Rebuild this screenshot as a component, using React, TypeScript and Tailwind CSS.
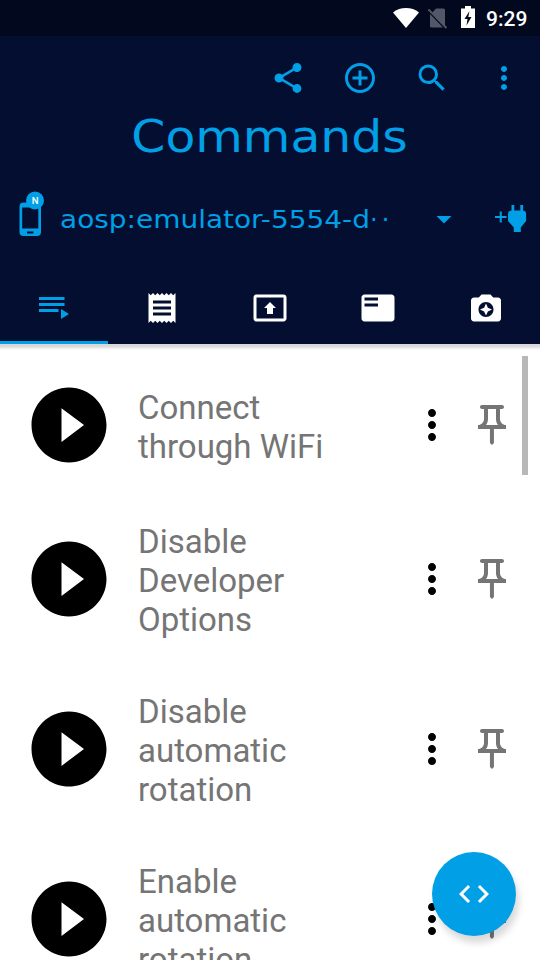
import {
  MdAddCircleOutline,
  MdArrowDropDown,
  MdCameraEnhance,
  MdCode,
  MdFeaturedPlayList,
  MdMoreVert,
  MdOutlinePushPin,
  MdPlayCircleFilled,
  MdPresentToAll,
  MdReceipt,
  MdSearch,
  MdShare,
} from "react-icons/md";

const commands = [
  { title: "Connect through WiFi", height: "h-[138px]", offset: "pt-1" },
  { title: "Disable Developer Options", height: "h-[170px]", offset: "pt-0.5" },
  { title: "Disable automatic rotation", height: "h-[170px]", offset: "pt-0.5" },
  { title: "Enable automatic rotation", height: "h-[170px]", offset: "pt-0.5" },
];

const StatusBar = () => (
  <div className="flex h-9 items-center justify-end bg-[#02091e] pr-3">
    <svg width="26" height="20" viewBox="0 0 26 20" className="mr-[9px]" fill="#fff">
      <path d="M0 4.5C7-1.4 19-1.4 26 4.5L13 20z" />
    </svg>
    <svg width="20" height="21" viewBox="0 0 20 21" className="mr-[13px]">
      <path d="M8 0.5h7.5a1.5 1.5 0 0 1 1.5 1.5v16l-13-13zM2 6l13 13.500H3.500a1.500 1.500 0 0 1-1.500-1.500z" fill="#535869" />
      <path d="M0.500 1.500L18.500 20" stroke="#535869" strokeWidth="1.800" />
    </svg>
    <svg width="14" height="22" viewBox="0 0 14 22" className="mr-[11px] -mt-0.5">
      <path d="M0 2.500h4V0h6v2.500h4V22H0z" fill="#fff" />
      <path d="M8.500 5L3.500 13h3l-1 6.500L10.500 11h-3.200z" fill="#02091e" />
    </svg>
    <span className="w-[42px] pt-0.5 text-[21px] leading-[34px] font-medium whitespace-nowrap text-white">9:29</span>
  </div>
);

const Toolbar = () => (
  <div className="flex h-[84px] items-center justify-end gap-9 pr-[18px]">
    <MdShare size={36} />
    <MdAddCircleOutline size={36} />
    <MdSearch size={36} />
    <MdMoreVert size={36} />
  </div>
);

const DeviceIcon = () => (
  <svg width="28" height="46" viewBox="0 0 28 46" className="shrink-0">
    <path
      fillRule="evenodd"
      fill="currentColor"
      d="M4.500 11.500H18a4 4 0 0 1 4 4V41a4 4 0 0 1-4 4H4.500a4 4 0 0 1-4-4V15.500a4 4 0 0 1 4-4zM3.200 16.500V37.500H19.300V16.500z"
    />
    <path d="M8 41.500h6.500" stroke="#030e30" strokeWidth="2" />
    <circle cx="16" cy="9.500" r="9" fill="currentColor" />
    <text x="16" y="13.200" textAnchor="middle" fontSize="9.500" fill="#fff" className="font-['Roboto',sans-serif] font-medium">
      N
    </text>
  </svg>
);

const PlugIcon = () => (
  <svg width="34" height="30" viewBox="0 0 34 30" fill="currentColor">
    <path d="M1 13h11.500M6.750 7.500v11" stroke="currentColor" strokeWidth="2" />
    <path d="M17.500 1h2.800v5.500h6V1h2.800v5.500q3 0.500 3 3V17l-5.300 6.500V28h-7v-4.500L14 17V9.500q0-2.500 3.500-3z" />
  </svg>
);

const DeviceRow = () => (
  <div className="flex h-[66px] items-center">
    <div className="flex w-[60px] shrink-0 pb-[10px] pl-[19px]">
      <DeviceIcon />
    </div>
    <div className="flex w-[366px] shrink-0 items-center pt-0.5 font-['DejaVu_Sans',sans-serif] text-[24px] leading-8">
      <span className="w-[310px] shrink-0">
        <span className="inline-block origin-left scale-x-[1.165] whitespace-nowrap">aosp:emulator-5554-d</span>
      </span>
      <span className="tracking-[4px]">··</span>
    </div>
    <MdArrowDropDown size={36} className="shrink-0" />
    <div className="ml-8 shrink-0">
      <PlugIcon />
    </div>
  </div>
);

const PlaylistIcon = () => (
  <svg width="36" height="36" viewBox="0 0 36 36" fill="currentColor">
    <path d="M3 7h25.500v3H3zM3 13h25.500v3H3zM3 19h19.500v3H3zM25 19v10l8-5z" />
  </svg>
);

const Tabs = () => (
  <div className="grid h-[72px] grid-cols-5 text-white">
    <div className="flex items-center justify-center border-b-[3px] border-[#009fe6] pt-[3px] text-[#009fe6]">
      <PlaylistIcon />
    </div>
    <div className="flex items-center justify-center">
      <MdReceipt size={36} />
    </div>
    <div className="flex items-center justify-center">
      <MdPresentToAll size={36} />
    </div>
    <div className="flex items-center justify-center">
      <MdFeaturedPlayList size={36} />
    </div>
    <div className="flex items-center justify-center">
      <MdCameraEnhance size={36} />
    </div>
  </div>
);

const Header = () => (
  <header className="h-[308px] bg-[#030e30] text-[#009fe6]">
    <Toolbar />
    <h1 className="-mt-[12px] flex h-14 items-center justify-center pt-0.5 font-['DejaVu_Sans',sans-serif] text-[44px] leading-none">
      <span className="inline-block scale-x-[1.11]">Commands</span>
    </h1>
    <div className="pt-[22px] pb-5">
      <DeviceRow />
    </div>
    <Tabs />
  </header>
);

const CommandList = () => (
  <main className="h-[616px] overflow-hidden pt-3 shadow-[inset_0_6px_3px_-2px_#d8d8d8]">
    {commands.map((command) => (
      <div key={command.title} className={`flex items-center pl-6 ${command.height}`}>
        <MdPlayCircleFilled size={90} className="shrink-0 text-black" />
        <p className={`ml-6 w-[200px] text-[33px] leading-[39px] text-[#757575] ${command.offset}`}>
          {command.title}
        </p>
        <MdMoreVert size={48} className="ml-[70px] shrink-0 text-black" />
        <MdOutlinePushPin size={48} className="ml-3 shrink-0 text-[#757575]" />
      </div>
    ))}
  </main>
);

export default function App() {
  return (
    <div className="relative h-[960px] w-[540px] overflow-hidden bg-white font-['Roboto',sans-serif]">
      <StatusBar />
      <Header />
      <CommandList />
      <div className="absolute top-[356px] right-3 h-[119px] w-1.5 bg-[#b8b8b8]" />
      <button className="absolute right-6 bottom-6 flex h-[84px] w-[84px] items-center justify-center rounded-full bg-[#009fe6] text-white shadow-[3px_7px_7px_rgba(0,0,0,0.15)]">
        <MdCode size={36} />
      </button>
    </div>
  );
}
